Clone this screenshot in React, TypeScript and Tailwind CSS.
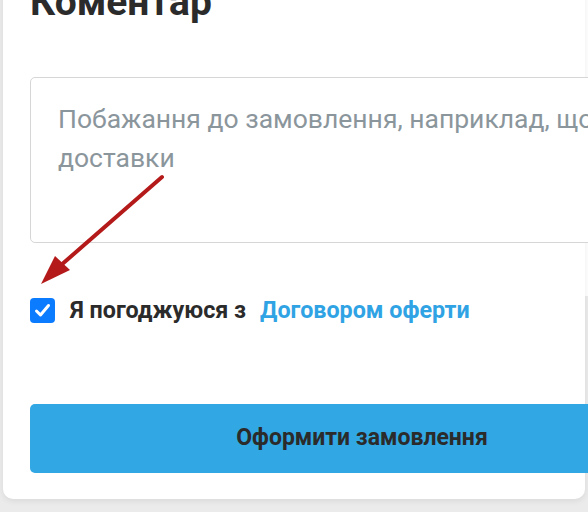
import React from "react";

export default function App() {
  return (
    <div className="relative h-[512px] w-[588px] overflow-hidden bg-[#ebebeb]" style={{ fontFamily: "Roboto, 'Noto Sans', sans-serif" }}>
      <div className="absolute right-0 top-0 h-[296px] w-[4px] bg-white" />
      <div className="relative ml-[3px] w-[582px] rounded-b-[10px] bg-white pb-[26px] pl-[27px] shadow-[0_2px_6px_rgba(0,0,0,0.08)]">
        <h2 className="-mt-[21px] text-[39px] font-bold leading-[47px] text-[#2b2b2b]">Коментар</h2>
        <div className="mt-[51px] h-[166px] w-[664px] rounded-[5px] border border-[#d6d6d6] bg-white px-[27px] pt-[21px]">
          <p className="whitespace-nowrap text-[26.5px] leading-[39px] text-[#8b969c]">
            Побажання до замовлення, наприклад, щодо
            <br />
            доставки
          </p>
        </div>
        <div className="relative mt-[54px] flex h-[26px] items-center">
          <div className="flex h-[25px] w-[25px] items-center justify-center rounded-[4px] bg-[#0b7bff]">
            <svg width="17" height="15" viewBox="0 0 17 15">
              <path d="M2.5 8 L6.5 12 L14.5 2.5" fill="none" stroke="white" strokeWidth="3" strokeLinecap="round" strokeLinejoin="round" />
            </svg>
          </div>
          <span className="ml-[15px] text-[23.3px] font-bold text-[#2b2b2b]">Я погоджуюся з</span>
          <span className="ml-[14px] text-[23.3px] font-bold text-[#30a3e4]">Договором оферти</span>
        </div>
        <button className="mt-[81px] flex h-[69px] w-[664px] items-center justify-center rounded-[5px] bg-[#31a7e3] text-[23px] font-bold text-[#2b2b2b]">
          Оформити замовлення
        </button>
      </div>
      <svg className="absolute left-0 top-0" width="200" height="300" viewBox="0 0 200 300">
        <line x1="162" y1="177" x2="60" y2="266" stroke="#b51a1a" strokeWidth="4" strokeLinecap="round" />
        <polygon points="41,284 55,256 70,270" fill="#b51a1a" />
      </svg>
    </div>
  );
}
